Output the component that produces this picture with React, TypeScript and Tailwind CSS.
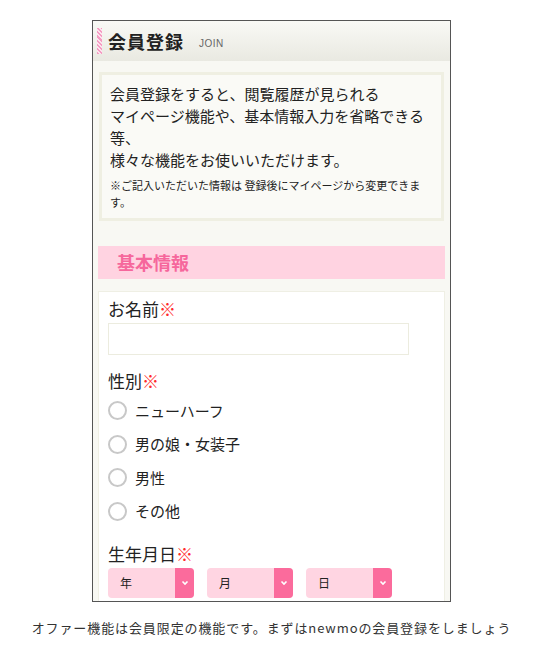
import React from 'react';

const jp = "font-['Noto_Sans_CJK_JP','Noto_Sans',sans-serif]";

const Required: React.FC = () => <span className="text-[#ff2a2a]">※</span>;

const Radio: React.FC<{ label: string }> = ({ label }) => (
  <label className="flex items-center h-[33.5px] gap-[8px]">
    <span className="w-[19px] h-[19px] rounded-full border-2 border-[#c8c8c8] bg-white" />
    <span className="text-[15px] text-[#222]">{label}</span>
  </label>
);

const DateSelect: React.FC<{ label: string }> = ({ label }) => (
  <div className="flex w-[86px] h-[30px] rounded-[4px] overflow-hidden bg-[#ffd5e2]">
    <span className="flex-1 flex items-center pl-[12px] text-[12px] text-[#222]">{label}</span>
    <span className="w-[19px] bg-[#fb6b9c] flex items-center justify-center">
      <svg width="8" height="6" viewBox="0 0 8 6">
        <path d="M1.5 1.5 L4 4 L6.5 1.5" stroke="#fff" strokeWidth="1.6" fill="none" />
      </svg>
    </span>
  </div>
);

const App: React.FC = () => {
  return (
    <div className={`w-[543px] h-[672px] bg-white pt-[20px] ${jp}`}>
      <div className="ml-[92px] w-[359px] h-[582px] border border-[#555] bg-[#f8f8f3] overflow-hidden">
        {/* header */}
        <div className="h-[40px] flex items-center bg-gradient-to-b from-[#f9f9f5] to-[#e9e9e1]">
          <div className="ml-[4px] w-[5px] h-[26px] bg-[repeating-linear-gradient(45deg,#f59cc3_0_1.5px,#fde4ee_1.5px_3px)]" />
          <h1 className="ml-[6px] text-[18px] font-bold text-[#222] tracking-[1px]">会員登録</h1>
          <span className="ml-[15px] mt-[4px] text-[10px] tracking-[0.5px] text-[#666] font-['Liberation_Sans',sans-serif]">JOIN</span>
        </div>

        {/* intro */}
        <div className="mt-[11px] mx-[6px] h-[149px] border-[3px] border-[#efefe2] bg-[#fafaf6] pl-[8px] pr-[13px] pt-[8px]">
          <p className="text-[15px] leading-[22px] text-[#222]">
            会員登録をすると、閲覧履歴が見られる
            <br />
            マイページ機能や、基本情報入力を省略できる等、
            <br />
            様々な機能をお使いいただけます。
          </p>
          <p className="mt-[6px] text-[11px] leading-[17px] text-[#222]">
            ※ご記入いただいた情報は 登録後にマイページから変更できます。
          </p>
        </div>

        {/* section title */}
        <div className="mt-[25px] mx-[5px] h-[33px] bg-[#ffd3e1] flex items-center pl-[19px]">
          <h2 className="text-[18px] font-bold text-[#f6679c]">基本情報</h2>
        </div>

        {/* form */}
        <div className="mt-[12px] mx-[5px] h-[320px] bg-white border border-[#efefe4] px-[9px] pt-[5px]">
          <div className="text-[17px] leading-[24px] text-[#222]">
            お名前<Required />
          </div>
          <div className="mt-[2px] w-[301px] h-[32px] border border-[#ececdf] bg-white" />

          <div className="mt-[14px] text-[17px] leading-[24px] text-[#222]">
            性別<Required />
          </div>
          <div className="mt-[1px] flex flex-col">
            <Radio label="ニューハーフ" />
            <Radio label="男の娘・女装子" />
            <Radio label="男性" />
            <Radio label="その他" />
          </div>

          <div className="mt-[14px] text-[17px] leading-[24px] text-[#222]">
            生年月日<Required />
          </div>
          <div className="mt-[2px] flex gap-[13px]">
            <DateSelect label="年" />
            <DateSelect label="月" />
            <DateSelect label="日" />
          </div>
        </div>
      </div>

      <p className="mt-[16px] text-center text-[13px] tracking-[0.9px] text-[#333]">
        オファー機能は会員限定の機能です。まずはnewmoの会員登録をしましょう
      </p>
    </div>
  );
};

export default App;
